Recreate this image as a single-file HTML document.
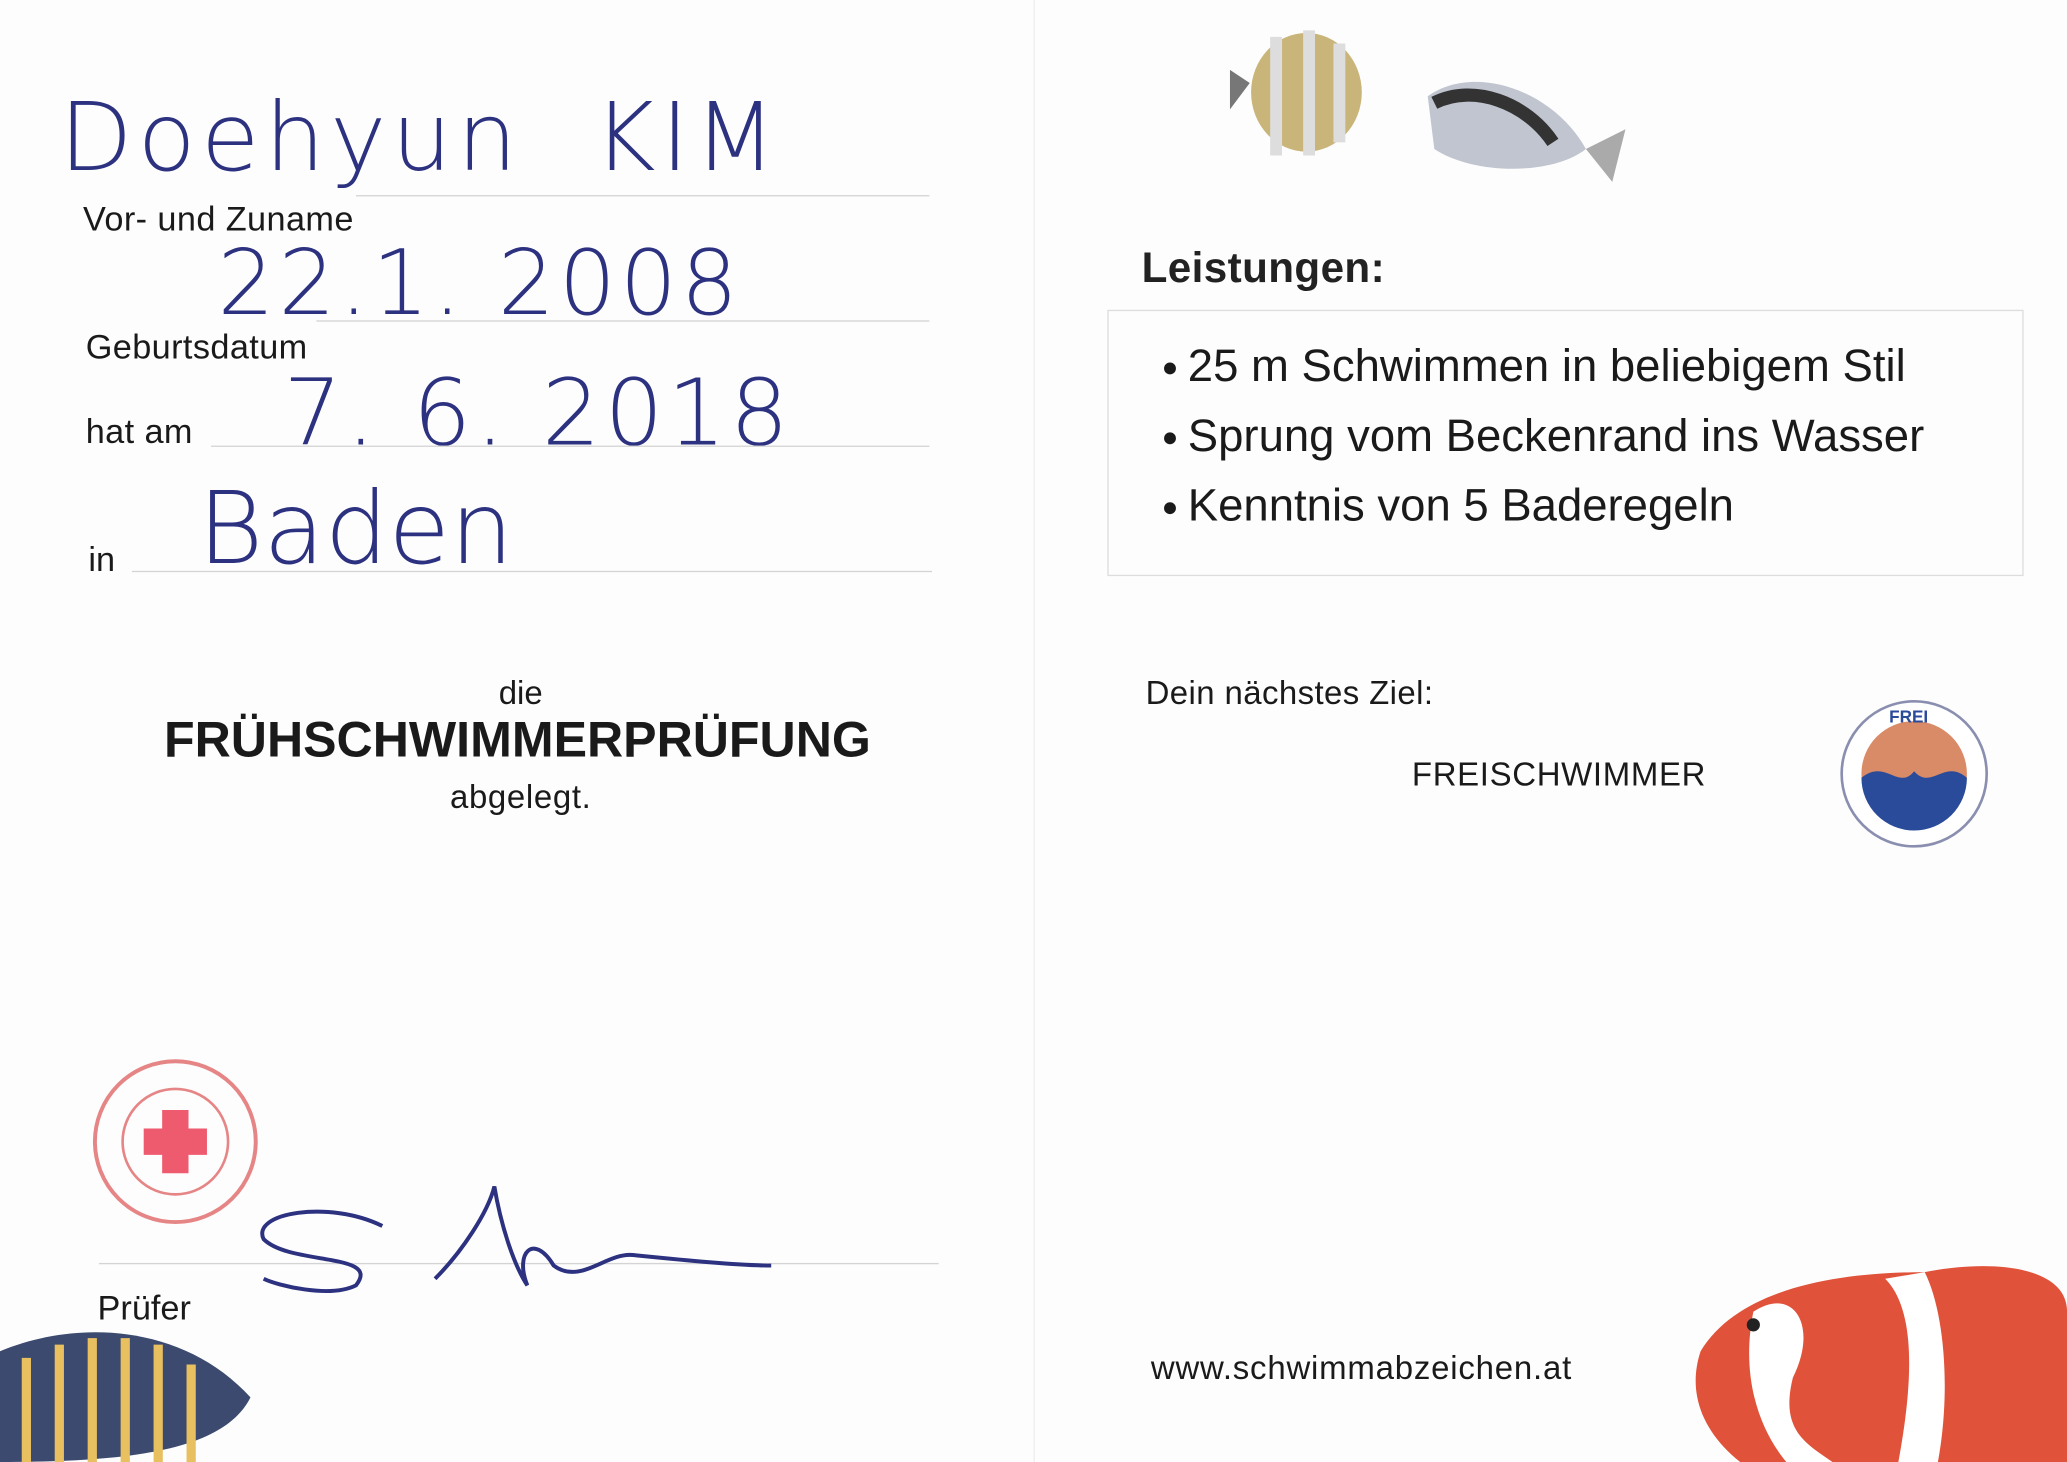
<!DOCTYPE html>
<html><head><meta charset="utf-8"><style>
html,body{margin:0;padding:0;background:#fff;width:2067px;height:1462px;overflow:hidden}
#w{position:absolute;left:0;top:0;width:1568px;height:1109px;transform:scale(1.3183);transform-origin:0 0;font-family:"Liberation Sans",sans-serif;color:#1a1a1a;background:#fdfdfd}
.t{position:absolute;white-space:nowrap}
.l{position:absolute;height:0;border-top:1.5px solid #d4d4d4}
.h{position:absolute;white-space:nowrap;color:#2c3180;font-family:"DejaVu Sans","Liberation Sans",sans-serif;font-weight:200}
.b{position:absolute;width:9px;height:9px;border-radius:50%;background:#1a1a1a}
</style></head><body><div id="w">
<div style="position:absolute;left:784px;top:0;width:1px;height:1109px;background:#eee"></div>

<div class="h" style="left:45px;top:62px;font-size:72px;letter-spacing:4px">Doehyun&nbsp; KIM</div>
<div class="l" style="left:270px;top:148px;width:435px"></div>
<div class="t" style="left:63px;top:151px;font-size:26px;letter-spacing:0.3px">Vor- und Zuname</div>
<div class="h" style="left:165px;top:176px;font-size:68px;letter-spacing:3px">22.1. 2008</div>
<div class="l" style="left:240px;top:243px;width:465px"></div>
<div class="t" style="left:65px;top:248px;font-size:26px;letter-spacing:0.3px">Geburtsdatum</div>
<div class="t" style="left:65px;top:312px;font-size:26px;letter-spacing:0.3px">hat am</div>
<div class="h" style="left:215px;top:272px;font-size:70px;letter-spacing:3px">7. 6. 2018</div>
<div class="l" style="left:160px;top:338px;width:545px"></div>
<div class="t" style="left:67px;top:409px;font-size:26px">in</div>
<div class="h" style="left:150px;top:356px;font-size:76px">Baden</div>
<div class="l" style="left:100px;top:433px;width:607px"></div>

<div class="t" style="left:0;width:790px;text-align:center;top:512px;font-size:25px">die</div>
<div class="t" style="left:0;width:785px;text-align:center;top:541px;font-size:38px;font-weight:bold">FRÜHSCHWIMMERPRÜFUNG</div>
<div class="t" style="left:0;width:790px;text-align:center;top:591px;font-size:25px;letter-spacing:0.5px">abgelegt.</div>

<svg style="position:absolute;left:68px;top:802px" width="132" height="130">
<circle cx="65" cy="64" r="61" fill="none" stroke="#e68585" stroke-width="3"/>
<circle cx="65" cy="64" r="40" fill="none" stroke="#e68585" stroke-width="2"/>
<path d="M55 40h20v14h14v20h-14v14h-20v-14h-14v-20h14z" fill="#ef5b6e"/>
</svg>
<div class="l" style="left:75px;top:958px;width:637px"></div>
<div class="t" style="left:74px;top:977px;font-size:26px">Prüfer</div>
<svg style="position:absolute;left:190px;top:890px" width="400" height="100"><path d="M100 40 C60 20 0 30 10 50 C30 70 100 60 80 85 C60 95 20 85 10 80 M140 80 C160 60 180 30 185 10 C190 40 200 70 210 85 C200 60 215 45 230 70 C250 85 270 60 290 62 C330 66 370 70 395 70" fill="none" stroke="#2c3180" stroke-width="3"/></svg>

<svg style="position:absolute;left:0;top:1000px" width="200" height="109"><path d="M0 25 C60 0 140 5 190 60 C170 100 100 109 0 109Z" fill="#3b4a6e"/><path d="M20 30v79M45 20v89M70 15v94M95 15v94M120 20v89M145 35v74" stroke="#e8c060" stroke-width="7"/></svg>

<svg style="position:absolute;left:928px;top:18px" width="320" height="130">
<ellipse cx="63" cy="52" rx="42" ry="45" fill="#c9b57a"/><path d="M40 10v90M65 5v95M88 15v75" stroke="#ddd" stroke-width="9"/><path d="M20 45l-15-10v30z" fill="#777"/>
<path d="M155 55 C190 30 250 50 275 95 C250 115 190 115 160 95Z" fill="#c0c5d0"/><path d="M160 60C190 45 230 60 250 90" stroke="#333" stroke-width="10" fill="none"/><path d="M275 95l30-15-10 40z" fill="#aaa"/>
</svg>

<div class="t" style="left:866px;top:185px;font-size:32px;font-weight:bold;color:#222;letter-spacing:0.3px">Leistungen:</div>
<div style="position:absolute;left:840px;top:235px;width:693px;height:200px;border:1.5px solid #ddd"></div>
<div class="b" style="left:883px;top:275px"></div>
<div class="b" style="left:883px;top:328px"></div>
<div class="b" style="left:883px;top:381px"></div>
<div class="t" style="left:901px;top:259px;font-size:34.5px">25 m Schwimmen in beliebigem Stil</div>
<div class="t" style="left:901px;top:312px;font-size:34.5px">Sprung vom Beckenrand ins Wasser</div>
<div class="t" style="left:901px;top:365px;font-size:34.5px">Kenntnis von 5 Baderegeln</div>

<div class="t" style="left:869px;top:512px;font-size:25px;letter-spacing:0.3px">Dein nächstes Ziel:</div>
<div class="t" style="left:1071px;top:574px;font-size:25px;letter-spacing:0.5px">FREISCHWIMMER</div>
<svg style="position:absolute;left:1395px;top:530px" width="115" height="115">
<circle cx="57" cy="57" r="55" fill="#fff" stroke="#8a8fb0" stroke-width="2"/>
<circle cx="57" cy="57" r="40" fill="#d98a66"/>
<path d="M17 60 C35 45 45 70 57 55 C70 70 80 45 97 60 A40 40 0 0 1 17 60Z" fill="#2a4a9a"/>
<text x="38" y="18" font-size="13" font-weight="bold" fill="#2a4a9a" font-family="Liberation Sans">FREI</text>
</svg>

<div class="t" style="left:873px;top:1024px;font-size:25px;letter-spacing:0.6px">www.schwimmabzeichen.at</div>
<svg style="position:absolute;left:1280px;top:935px" width="288" height="174">
<path d="M10 90 C40 40 120 30 180 30 C230 20 288 25 288 60 V174 H40 C10 150 0 120 10 90Z" fill="#e0523a"/>
<path d="M50 60 C80 40 100 70 80 110 C70 150 90 160 110 174 H75 C55 150 40 110 50 60Z" fill="#fff"/>
<path d="M150 35 C175 60 170 120 160 174 H190 C200 120 195 60 180 30Z" fill="#fff"/>
<circle cx="50" cy="70" r="5" fill="#222"/>
</svg>
</div></body></html>
